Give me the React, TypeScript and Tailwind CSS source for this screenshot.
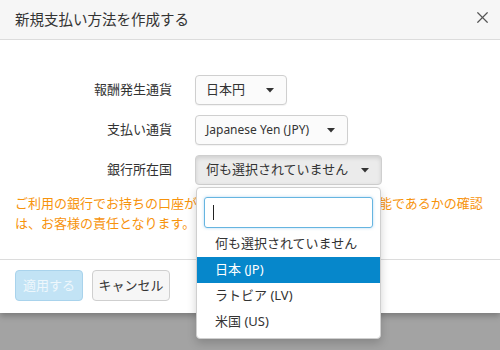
import { X } from 'lucide-react'

const jp = { fontFamily: '"Noto Sans", "Noto Sans CJK JP", sans-serif' }

function Caret() {
  return (
    <svg width="8" height="5" viewBox="0 0 8 5" className="shrink-0">
      <path d="M0 0 L8 0 L4 4.5 Z" fill="#333" />
    </svg>
  )
}

function SelectBox({
  label,
  value,
  width,
  pressed,
  latin,
}: {
  label: string
  value: string
  width: string
  pressed?: boolean
  latin?: boolean
}) {
  return (
    <div className="flex h-[30px] items-center">
      <div className="w-[158px] pr-px text-right text-[13px] text-[#333]">{label}</div>
      <div
        className={
          'ml-[22px] flex h-[30px] items-center justify-between rounded-[4px] border border-[#cfcfcf] pl-[10px] pr-[12px] ' +
          width +
          (pressed
            ? ' bg-[#ebebeb] shadow-[inset_0_2px_4px_rgba(0,0,0,0.12)]'
            : ' bg-[#fbfbfb] shadow-[0_1px_1px_rgba(0,0,0,0.05)]')
        }
      >
        <span className={latin ? 'text-[12px] text-[#333]' : 'text-[13px] text-[#333]'}>{value}</span>
        <Caret />
      </div>
    </div>
  )
}

export default function App() {
  return (
    <div className="relative h-[350px] w-[500px] overflow-hidden bg-[#a3a3a3]" style={jp}>
      <div className="bg-white shadow-[0_3px_6px_rgba(0,0,0,0.25)]">
        <div className="flex h-[40px] items-center justify-between border-b border-[#dcdcdc] bg-[#f6f6f6] pl-[15px] pr-[8px]">
          <h1 className="text-[14.5px] text-[#333]">新規支払い方法を作成する</h1>
          <X size={19} strokeWidth={1.5} className="mb-[4px] text-[#555]" />
        </div>
        <div className="px-[15px] pb-[26px] pt-[35px]">
          <div className="flex flex-col gap-[10px]">
            <SelectBox label="報酬発生通貨" value="日本円" width="w-[92px]" />
            <SelectBox label="支払い通貨" value="Japanese Yen (JPY)" width="w-[153px]" latin />
            <SelectBox label="銀行所在国" value="何も選択されていません" width="w-[187px]" pressed />
          </div>
          <p className="mt-[8px] text-[13px] leading-[20px] text-[#f7930c]">
            ご利用の銀行でお持ちの口座が選択した通貨での受け取りが可能であるかの確認
            <br />
            は、お客様の責任となります。
          </p>
        </div>
        <div className="flex gap-[9px] border-t border-[#dcdcdc] px-[15px] pb-[12px] pt-[10px]">
          <button className="h-[31px] w-[68px] rounded-[4px] border border-[#a9d3ec] bg-[#c2e3f5] text-[13px] text-[#eef7fc]">
            適用する
          </button>
          <button className="h-[31px] w-[78px] rounded-[4px] border border-[#cfcfcf] bg-[#f6f6f6] text-[13px] text-[#333]">
            キャンセル
          </button>
        </div>
      </div>

      <div className="absolute left-[196px] top-[187px] h-[152px] w-[185px] rounded-[4px] border border-[#cfcfcf] bg-white shadow-[0_4px_10px_rgba(0,0,0,0.18)]">
        <div className="px-[7px] pt-[9px]">
          <div className="flex h-[31px] items-center rounded-[3px] border border-[#66b5e0] pl-[8px] shadow-[0_0_3px_rgba(102,175,233,0.5)]">
            <div className="h-[15px] w-px bg-[#222]" />
          </div>
        </div>
        <div className="mt-[3px] flex flex-col text-[13px] text-[#333]">
          <div className="flex h-[26px] items-center pl-[18px]">何も選択されていません</div>
          <div className="flex h-[26px] items-center bg-[#0687cb] pl-[18px] text-white">日本 (JP)</div>
          <div className="flex h-[26px] items-center pl-[18px]">ラトビア (LV)</div>
          <div className="flex h-[26px] items-center pl-[18px]">米国 (US)</div>
        </div>
      </div>
    </div>
  )
}
